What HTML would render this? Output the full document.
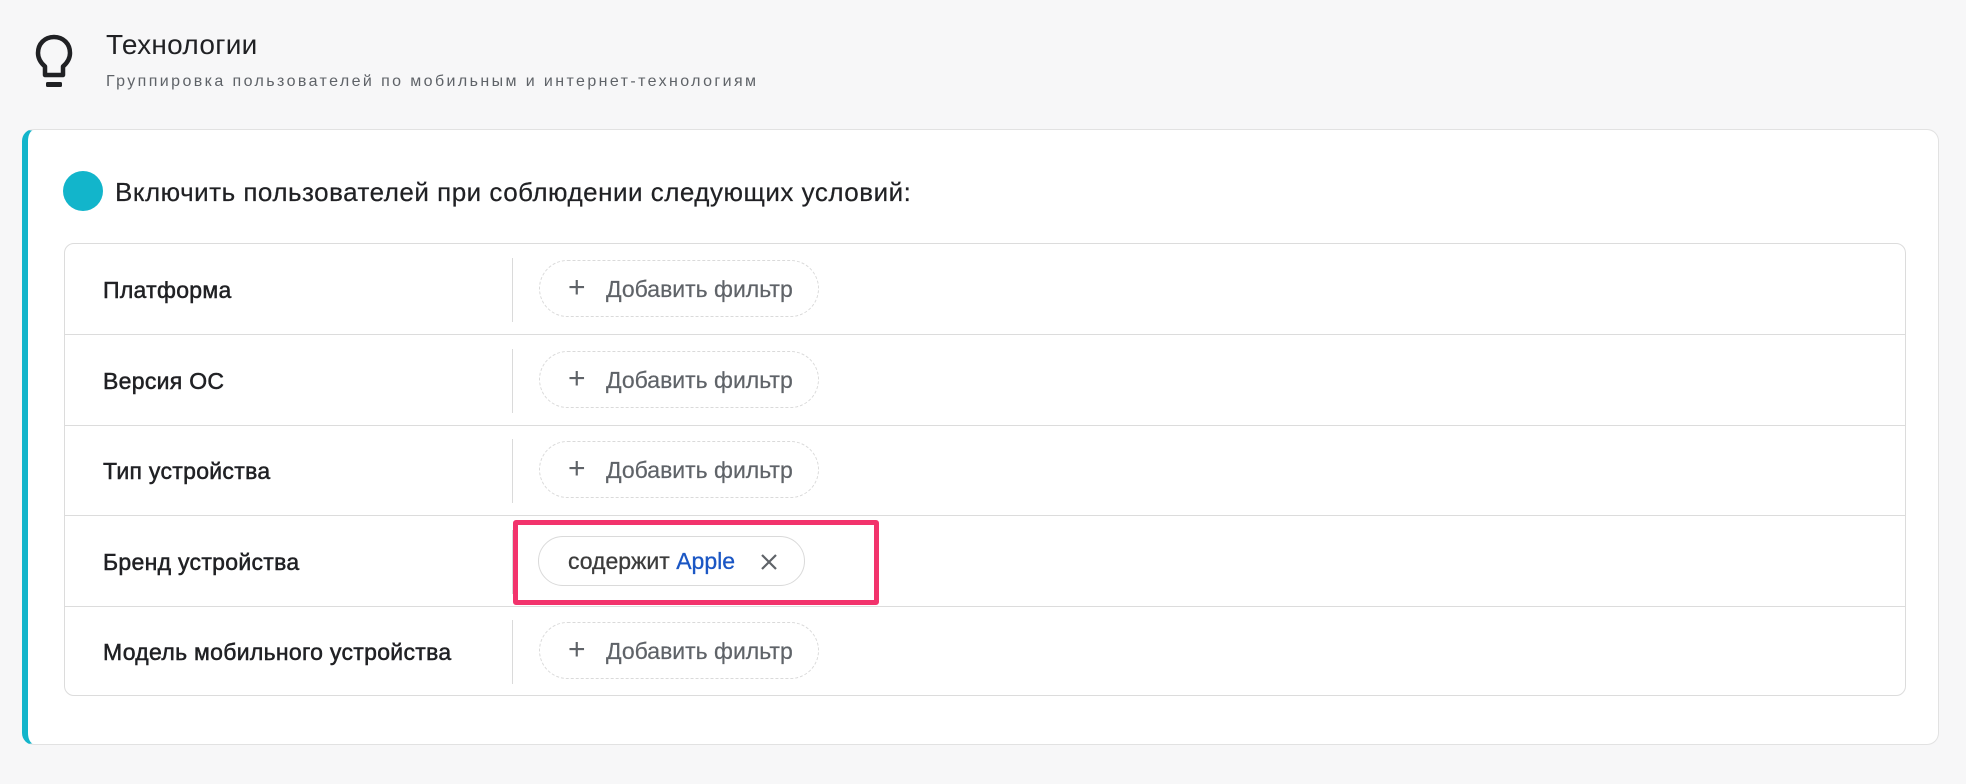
<!DOCTYPE html>
<html><head><meta charset="utf-8"><style>
*{box-sizing:border-box;margin:0;padding:0}
body{width:1966px;height:784px;background:#f7f7f8;font-family:"Liberation Sans",sans-serif;position:relative;overflow:hidden;color:#202124}
.abs{position:absolute}
.title{left:106px;top:29px;font-size:28px;letter-spacing:0.3px;color:#202124;white-space:nowrap}
.sub{left:106px;top:73px;font-size:16px;color:#5f6368;letter-spacing:2.4px;white-space:nowrap}
.card{left:22px;top:129px;width:1917px;height:616px;background:#fff;border:1px solid #e2e2e2;border-left:6px solid #12b5cb;border-radius:12px}
.dot{left:63px;top:171px;width:40px;height:40px;border-radius:50%;background:#12b5cb}
.head{left:115px;top:177px;font-size:26px;letter-spacing:0.5px;white-space:nowrap;color:#202124;-webkit-text-stroke:0.2px #202124}
.table{left:64px;top:243px;width:1842px;height:453px;border:1px solid #dcdcdc;border-radius:10px;background:#fff}
.row{position:absolute;left:0;width:100%;height:91px;border-bottom:1px solid #dcdcdc}
.row:last-child{border-bottom:none}
.lbl{position:absolute;left:38px;top:33px;font-size:23px;letter-spacing:0.3px;color:#202124;white-space:nowrap;-webkit-text-stroke:0.5px #202124}
.vd{position:absolute;left:447px;top:14px;width:1px;height:64px;background:#dadada}
.btn{position:absolute;left:474px;top:16px;width:280px;height:57px;border:1px dashed #dadada;border-radius:29px;font-size:23px;color:#5f6368}
.btn .pl{position:absolute;left:28px;top:13px;font-size:30px;line-height:28px;font-weight:300}
.btn .tx{position:absolute;left:66px;top:15px;white-space:nowrap;-webkit-text-stroke:0.2px #5f6368}
.red{left:513px;top:520px;width:366px;height:85px;border:5px solid #f2336c;border-radius:3px}
.chip{left:538px;top:536px;width:267px;height:50px;border:1px solid #dadada;border-radius:25px;background:#fff}
.chip .t{position:absolute;left:29px;top:11px;font-size:23px;color:#3c3c3c;white-space:nowrap;-webkit-text-stroke:0.3px #3c3c3c}
.chip .t b{font-weight:normal;color:#1a56c4;-webkit-text-stroke:0.3px #1a56c4}
</style></head><body>
<svg class="abs" style="left:34px;top:34px" width="40" height="56" viewBox="0 0 40 56"><path d="M20 3C10.5 3 4 10 4 19c0 6.5 3.5 10.5 7 13.5V41h18v-8.5c3.5-3 7-7 7-13.5C36 10 29.5 3 20 3z" fill="none" stroke="#202124" stroke-width="4.5" stroke-linejoin="round"/><rect x="12" y="48" width="16" height="5" rx="1.5" fill="#202124"/></svg>
<div class="abs title">Технологии</div>
<div class="abs sub">Группировка пользователей по мобильным и интернет-технологиям</div>
<div class="abs card"></div>
<div class="abs dot"></div>
<div class="abs head">Включить пользователей при соблюдении следующих условий:</div>
<div class="abs table">
 <div class="row" style="top:0"><div class="lbl">Платформа</div><div class="vd"></div><div class="btn"><span class="pl">+</span><span class="tx">Добавить фильтр</span></div></div>
 <div class="row" style="top:91px"><div class="lbl">Версия ОС</div><div class="vd"></div><div class="btn"><span class="pl">+</span><span class="tx">Добавить фильтр</span></div></div>
 <div class="row" style="top:181px"><div class="lbl">Тип устройства</div><div class="vd"></div><div class="btn"><span class="pl">+</span><span class="tx">Добавить фильтр</span></div></div>
 <div class="row" style="top:272px"><div class="lbl">Бренд устройства</div><div class="vd"></div></div>
 <div class="row" style="top:362px"><div class="lbl">Модель мобильного устройства</div><div class="vd"></div><div class="btn"><span class="pl">+</span><span class="tx">Добавить фильтр</span></div></div>
</div>
<div class="abs red"></div>
<div class="abs chip"><span class="t">содержит <b>Apple</b></span>
<svg style="position:absolute;left:221px;top:16px" width="18" height="18" viewBox="0 0 18 18"><path d="M2 2L16 16M16 2L2 16" stroke="#5f6368" stroke-width="2.2"/></svg></div>
</body></html>
